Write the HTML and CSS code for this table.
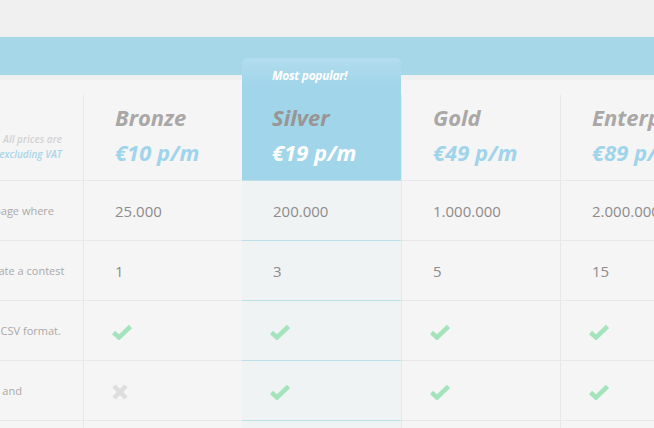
FILE: index.html
```html
<!DOCTYPE html>
<html>
<head>
<meta charset="utf-8">
<link rel="stylesheet" href="styles.css">
</head>
<body>
<div class="top"></div>
<div class="band"></div>
<div class="gap"></div>
<div class="pricing">
  <div class="grid">
    <div class="cell label head-note">
      <span class="note-a">All prices are</span>
      <span class="note-b">excluding VAT</span>
    </div>
    <div class="cell plan-head"><div class="name">Bronze</div><div class="price">€10 p/m</div></div>
    <div class="cell plan-head featured-head">
      <div class="badge">Most popular!</div>
      <div class="name">Silver</div><div class="price">€19 p/m</div>
    </div>
    <div class="cell plan-head"><div class="name">Gold</div><div class="price">€49 p/m</div></div>
    <div class="cell plan-head"><div class="name">Enterprise</div><div class="price">€89 p/m</div></div>

    <div class="cell label row">Views on the page where</div>
    <div class="cell val row">25.000</div>
    <div class="cell val row featured">200.000</div>
    <div class="cell val row">1.000.000</div>
    <div class="cell val row">2.000.000</div>

    <div class="cell label row">Pages that create a contest</div>
    <div class="cell val row">1</div>
    <div class="cell val row featured">3</div>
    <div class="cell val row">5</div>
    <div class="cell val row">15</div>

    <div class="cell label row">Export data in CSV format.</div>
    <div class="cell val row"><svg class="ic" viewBox="0 0 20 16"><polyline class="chk" points="1.5,8.5 7,13.5 18.5,2.5"/></svg></div>
    <div class="cell val row featured"><svg class="ic" viewBox="0 0 20 16"><polyline class="chk" points="1.5,8.5 7,13.5 18.5,2.5"/></svg></div>
    <div class="cell val row"><svg class="ic" viewBox="0 0 20 16"><polyline class="chk" points="1.5,8.5 7,13.5 18.5,2.5"/></svg></div>
    <div class="cell val row"><svg class="ic" viewBox="0 0 20 16"><polyline class="chk" points="1.5,8.5 7,13.5 18.5,2.5"/></svg></div>

    <div class="cell label row">Custom colors and</div>
    <div class="cell val row"><svg class="ic x" viewBox="0 0 16 16"><path class="crs" d="M2,2 L14,14 M14,2 L2,14"/></svg></div>
    <div class="cell val row featured"><svg class="ic" viewBox="0 0 20 16"><polyline class="chk" points="1.5,8.5 7,13.5 18.5,2.5"/></svg></div>
    <div class="cell val row"><svg class="ic" viewBox="0 0 20 16"><polyline class="chk" points="1.5,8.5 7,13.5 18.5,2.5"/></svg></div>
    <div class="cell val row"><svg class="ic" viewBox="0 0 20 16"><polyline class="chk" points="1.5,8.5 7,13.5 18.5,2.5"/></svg></div>

    <div class="cell label row"></div>
    <div class="cell val row"></div>
    <div class="cell val row featured"></div>
    <div class="cell val row"></div>
    <div class="cell val row"></div>
  </div>
</div>
</body>
</html>
```

FILE: styles.css
```css
html, body {
  margin: 0;
  padding: 0;
  background: #f0f0f0;
  overflow: hidden;
  font-family: "Open Sans", "DejaVu Sans", sans-serif;
}
.top { height: 37px; }
.band { height: 38px; background: #a6d7e9; }
.gap { height: 5px; }
.pricing {
  background: #f5f5f5;
  padding-top: 15px;
  height: 400px;
}
.grid {
  display: grid;
  grid-template-columns: 160px repeat(4, 159px);
  grid-template-rows: 85px repeat(5, 60px);
  margin-left: -77px;
  width: 796px;
}
.cell { box-sizing: border-box; }
.plan-head, .val { border-left: 1px solid #e8e8e8; }
.row { border-top: 1px solid #e8e8e8; }
.head-note {
  display: flex;
  flex-direction: column;
  align-items: flex-end;
  justify-content: flex-end;
  padding: 0 21px 18px 0;
  font-size: 10px;
  font-style: italic;
  font-weight: 600;
  line-height: 15px;
}
.note-a { color: #d2d2d2; }
.note-b { color: #a8d6ea; }
.plan-head {
  padding: 7px 0 0 31px;
  font-style: italic;
  font-weight: 700;
  white-space: nowrap;
  overflow: hidden;
}
.name { font-size: 22px; line-height: 31px; color: #aaa7a7; }
.price { font-size: 22px; line-height: 38px; color: #a0d4ea; }
.featured-head {
  position: relative;
  z-index: 1;
  margin-top: -37px;
  padding-top: 8px;
  padding-left: 30px;
  border-left: none;
  border-radius: 5px 5px 0 0;
  background: linear-gradient(#b2ddee, #a1d5ea 28px, #a1d5ea);
}
.featured-head .name { color: #999595; }
.featured-head .price { color: #ffffff; }
.badge {
  font-size: 12px;
  line-height: 20px;
  color: #ffffff;
  margin-bottom: 16px;
  letter-spacing: -0.3px;
}
.label.row {
  display: flex;
  align-items: center;
  padding-left: 3px;
  font-size: 11px;
  color: #aba8a8;
  white-space: nowrap;
}
.val {
  display: flex;
  align-items: center;
  padding-left: 31px;
  font-size: 15px;
  color: #8f8b8b;
}
.featured {
  background: #eff3f4;
  border-top-color: #bcdfec;
  border-left: none;
  padding-left: 31px;
}
.featured + .val { border-left: 1px solid #e8e8e8; }
.ic { width: 20px; height: 16px; margin-left: -3px; margin-top: 2px; }
.ic.x { width: 16px; height: 16px; }
.chk { fill: none; stroke: #a5e3bc; stroke-width: 4.5; stroke-linejoin: miter; }
.crs { fill: none; stroke: #dddddd; stroke-width: 4.5; }
```
